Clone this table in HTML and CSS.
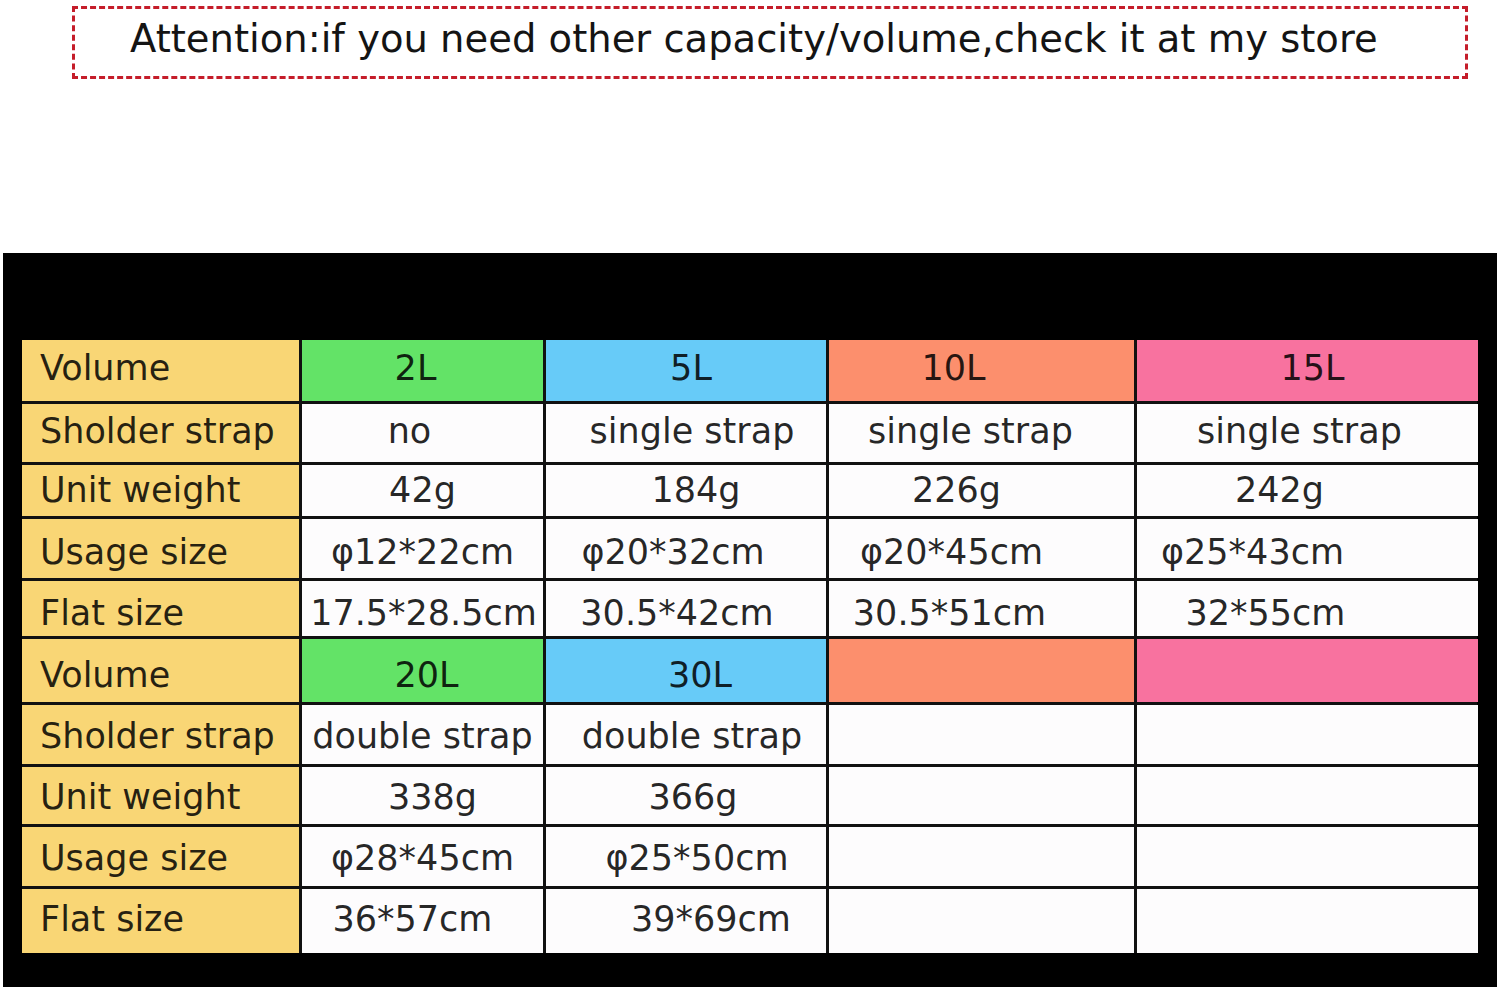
FILE: index.html
```html
<!DOCTYPE html>
<html lang="en">
<head>
<meta charset="utf-8">
<title>Capacity table</title>
<link rel="stylesheet" href="styles.css">
</head>
<body>
<div class="notice"><span class="notice-text">Attention:if you need other capacity/volume,check it at my store</span></div>
<div class="board">
  <div class="grid">
    <div class="row">
      <div class="c lab">Volume</div>
      <div class="c green m7">2L</div>
      <div class="c blue p5">5L</div>
      <div class="c orange m28">10L</div>
      <div class="c pink p5">15L</div>
    </div>
    <div class="row">
      <div class="c lab">Sholder strap</div>
      <div class="c w m13">no</div>
      <div class="c w p6">single strap</div>
      <div class="c w m11">single strap</div>
      <div class="c w m8">single strap</div>
    </div>
    <div class="row y2">
      <div class="c lab">Unit weight</div>
      <div class="c w">42g</div>
      <div class="c w p10">184g</div>
      <div class="c w m25">226g</div>
      <div class="c w m28">242g</div>
    </div>
    <div class="row y6">
      <div class="c lab">Usage size</div>
      <div class="c w">φ12*22cm</div>
      <div class="c w m13">φ20*32cm</div>
      <div class="c w m30">φ20*45cm</div>
      <div class="c w m55">φ25*43cm</div>
    </div>
    <div class="row y7">
      <div class="c lab">Flat size</div>
      <div class="c w tight">17.5*28.5cm</div>
      <div class="c w m9">30.5*42cm</div>
      <div class="c w m32">30.5*51cm</div>
      <div class="c w m42">32*55cm</div>
    </div>
    <div class="row y7">
      <div class="c lab">Volume</div>
      <div class="c green p4">20L</div>
      <div class="c blue p14">30L</div>
      <div class="c orange"></div>
      <div class="c pink"></div>
    </div>
    <div class="row y4">
      <div class="c lab">Sholder strap</div>
      <div class="c w">double strap</div>
      <div class="c w p6">double strap</div>
      <div class="c w"></div>
      <div class="c w"></div>
    </div>
    <div class="row y4">
      <div class="c lab">Unit weight</div>
      <div class="c w p10">338g</div>
      <div class="c w p7">366g</div>
      <div class="c w"></div>
      <div class="c w"></div>
    </div>
    <div class="row y4">
      <div class="c lab">Usage size</div>
      <div class="c w">φ28*45cm</div>
      <div class="c w p11">φ25*50cm</div>
      <div class="c w"></div>
      <div class="c w"></div>
    </div>
    <div class="row">
      <div class="c lab">Flat size</div>
      <div class="c w m10">36*57cm</div>
      <div class="c w p25">39*69cm</div>
      <div class="c w"></div>
      <div class="c w"></div>
    </div>
  </div>
</div>
</body>
</html>
```
FILE: styles.css
```css
html, body {
  margin: 0;
  padding: 0;
  background: #ffffff;
}
body {
  width: 1500px;
  height: 991px;
  overflow: hidden;
  font-family: "DejaVu Sans", Verdana, sans-serif;
  color: #1b1b1b;
}
.notice {
  margin: 6px 0 0 72px;
  height: 67px;
  border: 3px dashed #c51d2a;
  display: flex;
  align-items: center;
  padding-left: 55px;
  box-sizing: content-box;
  width: 1335px;
}
.notice-text {
  display: inline-block;
  font-size: 38.5px;
  line-height: 40px;
  white-space: nowrap;
  margin-top: -8px;
  color: #141414;
}
.board {
  margin: 174px 0 0 3px;
  width: 1494px;
  height: 734px;
  background: #000;
  box-sizing: border-box;
  padding: 87px 20px 0 19px;
}
.grid {
  display: grid;
  grid-template-columns: 277px 241px 280px 305px 341px;
  grid-template-rows: 61px 58px 51px 59px 55px 63px 59px 57px 59px 64px;
  gap: 3px;
  background: #111;
}
.row { display: contents; }
.c {
  display: flex;
  align-items: center;
  justify-content: center;
  font-size: 35px;
  line-height: 1;
  white-space: nowrap;
  padding-bottom: 4px;
  box-sizing: border-box;
  color: rgba(0, 0, 0, 0.86);
}
.y2 > .c { padding-bottom: 0; }
.y4 > .c { padding-bottom: 0; padding-top: 4px; }
.y6 > .c { padding-bottom: 0; padding-top: 8px; }
.y7 > .c { padding-bottom: 0; padding-top: 10px; }

.row > .lab {
  background: #f9d675;
  justify-content: flex-start;
  padding-left: 18px;
}
.w { background: #fdfcfd; }
.green { background: #63e367; }
.blue { background: #67cbf8; }
.orange { background: #fc8f6d; }
.pink { background: #f8729f; }
.row > .tight { padding-left: 2px; }

/* horizontal nudges of centred text */
.row > .m7 { padding-right: 14px; }
.row > .m8 { padding-right: 16px; }
.row > .m9 { padding-right: 18px; }
.row > .m10 { padding-right: 20px; }
.row > .m11 { padding-right: 22px; }
.row > .m13 { padding-right: 26px; }
.row > .m25 { padding-right: 50px; }
.row > .m28 { padding-right: 56px; }
.row > .m30 { padding-right: 60px; }
.row > .m32 { padding-right: 64px; }
.row > .m42 { padding-right: 84px; }
.row > .m55 { padding-right: 110px; }
.row > .p4 { padding-left: 8px; }
.row > .p5 { padding-left: 10px; }
.row > .p6 { padding-left: 12px; }
.row > .p7 { padding-left: 14px; }
.row > .p10 { padding-left: 20px; }
.row > .p11 { padding-left: 22px; }
.row > .p14 { padding-left: 28px; }
.row > .p25 { padding-left: 50px; }
```
